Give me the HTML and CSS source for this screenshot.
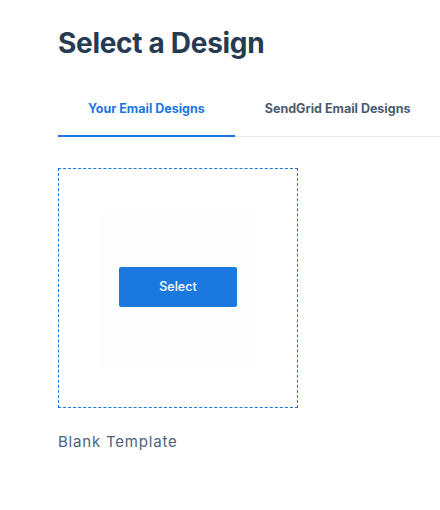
FILE: index.html
```html
<!DOCTYPE html>
<html lang="en">
<head>
  <meta charset="UTF-8">
  <meta name="viewport" content="width=device-width, initial-scale=1.0">
  <title>Select a Design</title>
  <link rel="stylesheet" href="styles.css">
</head>
<body>
  <div class="page">
    <h1 class="title">Select a Design</h1>
    <div class="tabs">
      <a class="tab active">Your Email Designs</a>
      <a class="tab">SendGrid Email Designs</a>
    </div>
    <div class="designs">
      <div class="design">
        <div class="thumb">
          <div class="preview"></div>
          <button class="select-btn">Select</button>
        </div>
        <p class="design-name">Blank Template</p>
      </div>
    </div>
  </div>
</body>
</html>
```

FILE: styles.css
```css
html, body {
  overflow: hidden;
}
body {
  margin: 0;
  font-family: Inter, "Noto Sans", Arial, sans-serif;
  background-color: #fff;
}
.page {
  padding: 26px 0 0 58px;
}
.title {
  margin: 0;
  font-size: 28px;
  font-weight: 700;
  color: #263b52;
  letter-spacing: -0.3px;
  line-height: 34px;
}
.tabs {
  display: flex;
  margin-top: 29px;
  border-bottom: 1px solid #e6e8eb;
}
.tab {
  padding: 12px 30px 19px;
  font-size: 12.5px;
  font-weight: 700;
  color: #4a5c71;
  white-space: nowrap;
  margin-bottom: -1px;
  border-bottom: 2px solid transparent;
}
.tab.active {
  color: #1a76e0;
  border-bottom-color: #1a76e0;
}
.designs {
  display: flex;
  margin-top: 31px;
}
.design {
  width: 240px;
}
.thumb {
  position: relative;
  box-sizing: border-box;
  width: 240px;
  height: 240px;
  border: 1px dashed #1a76e0;
  display: flex;
  align-items: center;
  justify-content: center;
}
.preview {
  position: absolute;
  left: 40px;
  top: 41px;
  width: 158px;
  height: 158px;
  background: #fefefe;
}
.select-btn {
  position: relative;
  width: 118px;
  height: 40px;
  margin-top: -3px;
  border: none;
  border-radius: 2px;
  background-color: #1b78df;
  color: #fff;
  font-family: inherit;
  font-size: 12.5px;
  font-weight: 500;
}
.design-name {
  margin: 24px 0 0;
  font-size: 15px;
  color: #4d6279;
  letter-spacing: 0.8px;
}
```
